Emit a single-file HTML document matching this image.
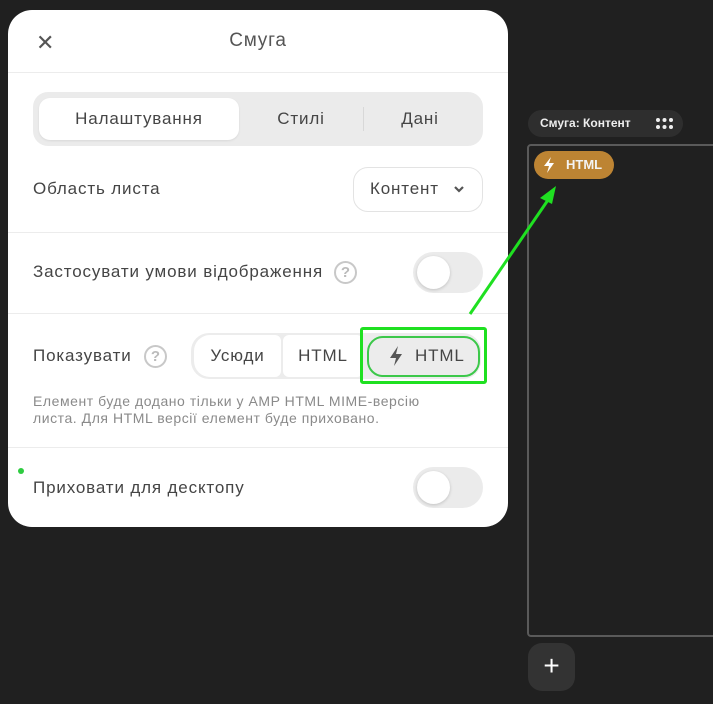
<!DOCTYPE html>
<html><head><meta charset="utf-8"><style>
*{margin:0;padding:0;box-sizing:border-box}
body{width:713px;height:704px;background:#202020;position:relative;overflow:hidden;font-family:"Liberation Sans","DejaVu Sans",sans-serif;color:#444}
.a{position:absolute}
.panel{left:8px;top:10px;width:500px;height:517px;background:#fff;border-radius:24px}
.hr{height:1px;background:#ececec;left:8px;width:500px}
.lbl{font-size:17px;color:#454545;white-space:nowrap;letter-spacing:0.85px}
.q{width:23px;height:23px;border:2px solid #c8c8c8;border-radius:50%;color:#bbb;font-size:15px;font-weight:bold;text-align:center;line-height:19px}
.tog{width:70px;height:41px;border-radius:21px;background:#ebebeb}
.tog i{position:absolute;left:4px;top:4px;width:33px;height:33px;border-radius:50%;background:#fff;box-shadow:0 1px 3px rgba(0,0,0,.18)}
</style></head><body>
<div class="a panel"></div>
<div class="a" style="left:36px;top:30px;font-size:22px;color:#555">✕</div>
<div class="a" style="left:0;width:516px;top:30px;text-align:center;font-size:19px;color:#555;letter-spacing:0.8px">Смуга</div>
<div class="a hr" style="top:72px"></div>
<div class="a" style="left:33px;top:92px;width:450px;height:54px;background:#ebebeb;border-radius:15px"></div>
<div class="a" style="left:39px;top:98px;width:200px;height:42px;background:#fff;border-radius:11px;box-shadow:0 1px 2px rgba(0,0,0,.08)"></div>
<div class="a lbl" style="left:39px;width:200px;top:109px;text-align:center">Налаштування</div>
<div class="a lbl" style="left:251px;width:100px;top:109px;text-align:center">Стилі</div>
<div class="a" style="left:363px;top:107px;width:1px;height:24px;background:#d8d8d8"></div>
<div class="a lbl" style="left:370px;width:100px;top:109px;text-align:center">Дані</div>
<div class="a lbl" style="left:33px;top:179px">Область листа</div>
<div class="a" style="left:353px;top:167px;width:130px;height:45px;border:1.5px solid #e3e3e3;border-radius:15px"></div>
<div class="a lbl" style="left:370px;top:179px">Контент</div>
<svg class="a" style="left:452px;top:184px" width="14" height="10"><path d="M3 3l4 4 4-4" stroke="#555" stroke-width="2.2" fill="none"/></svg>
<div class="a hr" style="top:232px"></div>
<div class="a lbl" style="left:33px;top:262px">Застосувати умови відображення</div>
<div class="a q" style="left:334px;top:261px">?</div>
<div class="a tog" style="left:413px;top:252px"><i></i></div>
<div class="a hr" style="top:313px"></div>
<div class="a lbl" style="left:33px;top:346px">Показувати</div>
<div class="a q" style="left:144px;top:345px">?</div>
<div class="a" style="left:191px;top:333px;width:290px;height:46px;background:#ececec;border-radius:18px"></div>
<div class="a" style="left:194px;top:335px;width:87px;height:42px;background:#fff;border-radius:16px 6px 6px 16px"></div>
<div class="a" style="left:283px;top:335px;width:80px;height:42px;background:#fff;border-radius:6px"></div>
<div class="a lbl" style="left:194px;width:87px;top:346px;text-align:center">Усюди</div>
<div class="a lbl" style="left:283px;width:80px;top:346px;text-align:center">HTML</div>
<div class="a" style="left:367px;top:336px;width:113px;height:41px;border:2px solid #3cc84a;border-radius:16px;background:#ececec"></div>
<svg class="a" style="left:387px;top:345px" width="18" height="22"><path d="M11 1L3 13h6l-2 8 8-12h-6z" fill="#555"/></svg>
<div class="a lbl" style="left:415px;top:346px">HTML</div>
<div class="a" style="left:360px;top:327px;width:127px;height:57px;border:3px solid #1fe021;border-radius:3px"></div>
<div class="a" style="left:33px;top:393px;font-size:14px;line-height:17px;color:#8a8a8a;white-space:nowrap;letter-spacing:0.55px">Елемент буде додано тільки у AMP HTML MIME-версію<br>листа. Для HTML версії елемент буде приховано.</div>
<div class="a hr" style="top:447px"></div>
<div class="a" style="left:18px;top:468px;width:6px;height:6px;border-radius:50%;background:#2ecc40"></div>
<div class="a lbl" style="left:33px;top:478px">Приховати для десктопу</div>
<div class="a tog" style="left:413px;top:467px"><i></i></div>
<div class="a" style="left:528px;top:110px;width:155px;height:27px;background:#2e2e2e;border-radius:14px"></div>
<div class="a" style="left:540px;top:116px;font-size:12px;font-weight:bold;color:#eee">Смуга: Контент</div>
<svg class="a" style="left:655px;top:117px" width="20" height="14"><g fill="#eee"><circle cx="3" cy="3" r="2"/><circle cx="9.5" cy="3" r="2"/><circle cx="16" cy="3" r="2"/><circle cx="3" cy="10" r="2"/><circle cx="9.5" cy="10" r="2"/><circle cx="16" cy="10" r="2"/></g></svg>
<div class="a" style="left:527px;top:144px;width:200px;height:493px;border:2px solid #5a5a5a;border-radius:4px"></div>
<div class="a" style="left:534px;top:151px;width:80px;height:28px;background:#bd8433;border-radius:14px"></div>
<svg class="a" style="left:542px;top:156px" width="14" height="18"><path d="M9 1L2 10h5l-2 7 7-10H7z" fill="#fff"/></svg>
<div class="a" style="left:566px;top:157px;font-size:13px;font-weight:bold;color:#f3f3f3">HTML</div>
<div class="a" style="left:528px;top:643px;width:47px;height:48px;background:#333;border-radius:14px"></div>
<div class="a" style="left:528px;top:649px;width:47px;text-align:center;font-size:28px;color:#fff;line-height:34px">+</div>
<svg class="a" style="left:0;top:0" width="713" height="704"><line x1="470" y1="314" x2="548" y2="200" stroke="#1fe021" stroke-width="3"/><path d="M556 186l-16 12 12 6z" fill="#1fe021"/></svg>
</body></html>
